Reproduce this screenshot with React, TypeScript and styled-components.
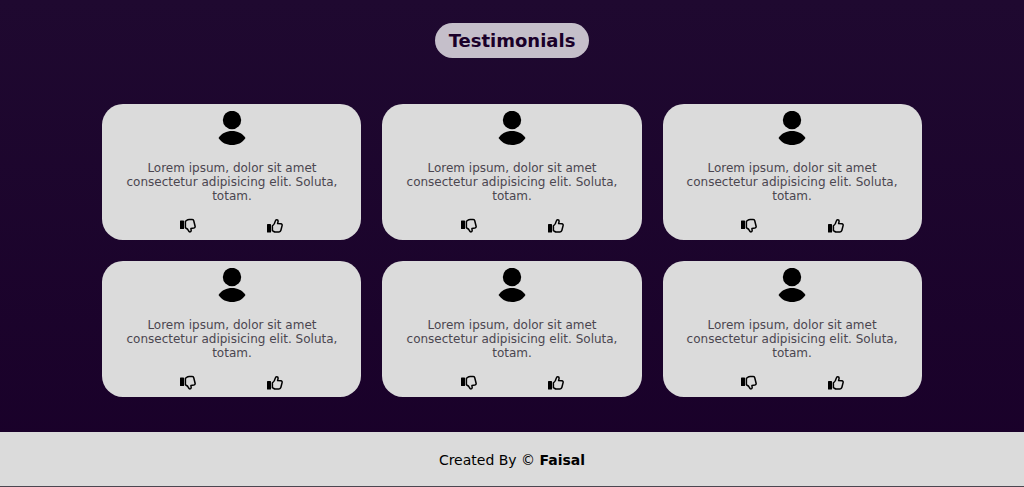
import React from "react";
import styled, { createGlobalStyle } from "styled-components";

const GlobalStyle = createGlobalStyle`
  * { box-sizing: border-box; }
  html { background: #1a002b; }
  body {
    margin: 0;
    font-family: Verdana, "DejaVu Sans", sans-serif;
  }
`;

const Page = styled.div`
  min-height: 100vh;
  display: flex;
  flex-direction: column;
  background: linear-gradient(#1f0930, #190029);
`;

const Section = styled.main`
  flex: 1;
  display: flex;
  flex-direction: column;
  align-items: center;
  padding: 23px 0 34px;
`;

const Title = styled.h1`
  margin: 0 0 46px;
  padding: 1px 14px 0;
  border-radius: 18px;
  background: #c5bfca;
  color: #1a0029;
  font-size: 18px;
  line-height: 34px;
`;

const Grid = styled.div`
  width: 80%;
  display: grid;
  grid-template-columns: repeat(3, 1fr);
  gap: 21px;
`;

const Card = styled.article`
  display: flex;
  flex-direction: column;
  align-items: center;
  padding: 7px 20px 6px;
  border-radius: 21px;
  background: #dbdbdb;
`;

const Avatar = styled.svg`
  display: block;
  width: 28px;
  height: 34px;
`;

const Quote = styled.p`
  margin: 16px 0 15px;
  color: #4b4650;
  font-size: 12px;
  line-height: 14px;
  text-align: center;
`;

const Actions = styled.div`
  align-self: stretch;
  display: flex;
  justify-content: center;
  gap: 71px;
`;

const IconButton = styled.button`
  display: flex;
  padding: 0;
  border: 0;
  background: none;
  color: #000;
  cursor: pointer;
`;

const Icon = styled.svg`
  width: 16px;
  height: 16px;
`;

const Hand = styled.path`
  fill: none;
  stroke: currentColor;
  stroke-width: 1.5;
  stroke-linejoin: round;
`;

const Footer = styled.footer`
  padding: 20px 20px 18px;
  border-bottom: 1px solid #4b4650;
  background: #dbdbdb;
  color: #000;
  font-size: 14px;
  line-height: 16px;
  text-align: center;
`;

const quotes = Array.from(
  { length: 6 },
  () => "Lorem ipsum, dolor sit amet consectetur adipisicing elit. Soluta, totam."
);

function ThumbDown() {
  return (
    <Icon viewBox="0 0 16 16" aria-hidden="true">
      <rect x="0" y="2.500" width="4" height="8.500" rx="0.6" fill="currentColor" />
      <Hand d="M5.400 3.300L7.200 2Q8 1.600 9 1.600H12.200Q13.600 1.600 13.800 3L15.100 8.200Q15.400 9.800 13.900 10.100L10.900 10.500L11.200 12.600Q11.200 13.900 10 13.900Q9 13.900 8.600 12.900Q8 10.900 5.400 9.700Z" />
    </Icon>
  );
}

function ThumbUp() {
  return (
    <Icon viewBox="0 0 16 16" aria-hidden="true">
      <rect x="0" y="6" width="4" height="8.500" rx="0.6" fill="currentColor" />
      <Hand d="M5.400 7.800Q7.600 6.300 8.200 3.300Q8.600 1.600 9.800 1.700Q11.200 1.800 11.100 3.300L10.600 5.600L13.900 5.800Q15.400 6 15.100 7.600L13.900 12.300Q13.500 13.900 12 13.900H8.300Q7.500 13.900 6.800 13.500L5.400 12.700Z" />
    </Icon>
  );
}

function Testimonial({ text }: { text: string }) {
  return (
    <Card>
      <Avatar viewBox="0 0 28 34" aria-hidden="true">
        <circle cx="14" cy="9" r="9.2" />
        <path d="M0.5 27C4 22 8.500 20 14 20S24 22 27.500 27C24 32 19.500 34 14 34S4 32 0.500 27Z" />
      </Avatar>
      <Quote>{text}</Quote>
      <Actions>
        <IconButton type="button" aria-label="Dislike">
          <ThumbDown />
        </IconButton>
        <IconButton type="button" aria-label="Like">
          <ThumbUp />
        </IconButton>
      </Actions>
    </Card>
  );
}

export default function App() {
  return (
    <>
      <GlobalStyle />
      <Page>
        <Section>
          <Title>Testimonials</Title>
          <Grid>
            {quotes.map((text, index) => (
              <Testimonial key={index} text={text} />
            ))}
          </Grid>
        </Section>
        <Footer>
          Created By © <b>Faisal</b>
        </Footer>
      </Page>
    </>
  );
}
